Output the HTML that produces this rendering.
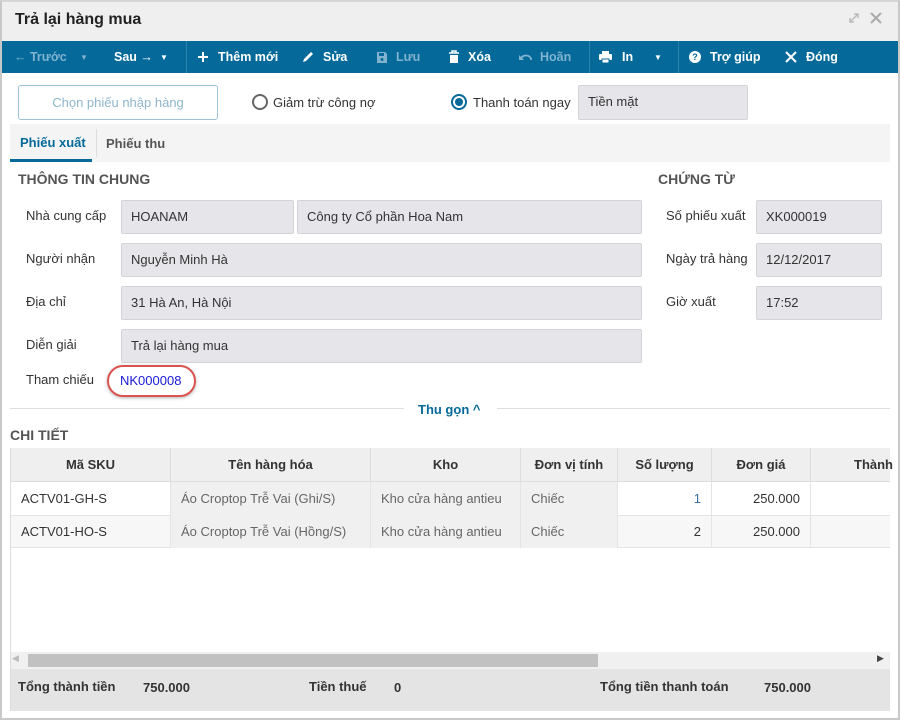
<!DOCTYPE html>
<html><head><meta charset="utf-8"><style>
*{box-sizing:border-box;margin:0;padding:0}
body{width:900px;height:720px;background:#fff;font-family:"Liberation Sans",sans-serif;font-size:13px;color:#333;position:relative;overflow:hidden}
.a{position:absolute}
.win{left:0;top:0;width:900px;height:720px;border:2px solid #c8c8c8;border-top-color:#d5d5d5}
.tb{left:2px;top:41px;width:896px;height:32px;background:#05699a;color:#fff;font-weight:bold;font-size:12.5px}
.tb span{position:absolute;top:9px}
.tb svg{position:absolute;top:9px}
.sep{position:absolute;top:0;width:1px;height:32px;background:#2a82ad}
.inp{position:absolute;background:#e6e6ea;border:1px solid #d3d3d8;border-radius:2px;padding:0 9px;line-height:32px;height:34px}
.lbl{position:absolute;color:#333}
.h{position:absolute;font-weight:bold;color:#555;font-size:14px}
.th{position:absolute;top:448px;height:34px;line-height:34px;text-align:center;font-weight:bold;border-right:1px solid #ddd}
.td{position:absolute;height:33px;line-height:33px;padding:0 10px;border-right:1px solid #e4e4e4}
</style></head><body>
<div class="a" style="left:0;top:0;width:900px;height:41px;background:#efefef"></div>
<div class="a win"></div>
<div class="a" style="left:15px;top:11px;font-size:16px;font-weight:bold;color:#222">Trả lại hàng mua</div>
<svg class="a" style="left:848px;top:12px" width="12" height="12" viewBox="0 0 12 12"><path d="M2 10L10 2M6 2h4v4M2 6v4h4" stroke="#bbb" stroke-width="1.5" fill="none"/></svg>
<svg class="a" style="left:870px;top:12px" width="12" height="12" viewBox="0 0 12 12"><path d="M1 1L11 11M11 1L1 11" stroke="#aaa" stroke-width="2"/></svg>
<div class="a tb">
 <span style="left:12px;color:#7fb3cf">← Trước</span><span style="left:78px;color:#7fb3cf;font-size:8px;top:12px">▼</span>
 <span style="left:112px">Sau →</span><span style="left:158px;font-size:8px;top:12px">▼</span>
 <div class="sep" style="left:184px"></div>
 <svg style="left:195px" width="12" height="14" viewBox="0 0 12 14"><path d="M6 2v10M1 7h10" stroke="#fff" stroke-width="2"/></svg><span style="left:216px">Thêm mới</span>
 <svg style="left:299px" width="13" height="14" viewBox="0 0 13 14"><path d="M2 12l1-3 7-7 2 2-7 7z" fill="#fff"/></svg><span style="left:321px">Sửa</span>
 <svg style="left:374px" width="12" height="14" viewBox="0 0 12 14"><path d="M1 2h8l2 2v9H1z" fill="#7fb3cf"/><rect x="3" y="3" width="5" height="3" fill="#05699a"/><circle cx="6" cy="9.5" r="1.5" fill="#05699a"/></svg><span style="left:394px;color:#7fb3cf">Lưu</span>
 <svg style="left:446px" width="12" height="14" viewBox="0 0 12 14"><path d="M1 3h10M4 3V1h4v2" stroke="#fff" stroke-width="1.5" fill="none"/><path d="M2 5h8v8H2z" fill="#fff"/></svg><span style="left:466px">Xóa</span>
 <svg style="left:516px" width="14" height="14" viewBox="0 0 14 14"><path d="M3 9a5 4 0 0 1 10 1" stroke="#7fb3cf" stroke-width="1.8" fill="none"/><path d="M1 5v5h5z" fill="#7fb3cf"/></svg><span style="left:538px;color:#7fb3cf">Hoãn</span>
 <div class="sep" style="left:587px"></div>
 <svg style="left:596px" width="15" height="14" viewBox="0 0 15 14"><rect x="4" y="1" width="7" height="3" fill="#fff"/><rect x="1" y="4" width="13" height="6" rx="1" fill="#fff"/><rect x="4" y="9" width="7" height="4" fill="#fff" stroke="#05699a"/></svg><span style="left:620px">In</span><span style="left:652px;font-size:8px;top:12px">▼</span>
 <div class="sep" style="left:676px"></div>
 <span style="left:687px;width:12px;height:12px;border-radius:50%;background:#fff;color:#05699a;font-size:9px;text-align:center;line-height:12px;top:10px">?</span><span style="left:708px">Trợ giúp</span>
 <svg style="left:783px;top:10px" width="12" height="12" viewBox="0 0 12 12"><path d="M1 1L11 11M11 1L1 11" stroke="#fff" stroke-width="2"/></svg><span style="left:804px">Đóng</span>
</div>
<div class="a" style="left:18px;top:85px;width:200px;height:35px;border:1px solid #9cc2d6;border-radius:3px;text-align:center;line-height:33px;color:#8fb6cc">Chọn phiếu nhập hàng</div>
<div class="a" style="left:252px;top:94px;width:16px;height:16px;border:2px solid #666;border-radius:50%"></div>
<div class="lbl" style="left:273px;top:95px">Giảm trừ công nợ</div>
<div class="a" style="left:451px;top:94px;width:16px;height:16px;border:2px solid #05699a;border-radius:50%"><div class="a" style="left:2px;top:2px;width:8px;height:8px;border-radius:50%;background:#05699a"></div></div>
<div class="lbl" style="left:473px;top:95px">Thanh toán ngay</div>
<div class="inp" style="left:578px;top:85px;width:170px;height:35px">Tiền mặt</div>
<div class="a" style="left:10px;top:124px;width:880px;height:38px;background:#f4f4f4"></div>
<div class="a" style="left:20px;top:135px;font-weight:bold;color:#05699a">Phiếu xuất</div>
<div class="a" style="left:10px;top:159px;width:82px;height:3px;background:#05699a"></div>
<div class="a" style="left:96px;top:129px;width:1px;height:28px;background:#ddd"></div>
<div class="a" style="left:106px;top:136px;font-weight:bold;color:#555">Phiếu thu</div>
<div class="h" style="left:18px;top:171px">THÔNG TIN CHUNG</div>
<div class="h" style="left:658px;top:171px">CHỨNG TỪ</div>
<div class="lbl" style="left:26px;top:208px">Nhà cung cấp</div>
<div class="lbl" style="left:26px;top:251px">Người nhận</div>
<div class="lbl" style="left:26px;top:294px">Địa chỉ</div>
<div class="lbl" style="left:26px;top:337px">Diễn giải</div>
<div class="lbl" style="left:26px;top:372px">Tham chiếu</div>
<div class="inp" style="left:121px;top:200px;width:173px">HOANAM</div>
<div class="inp" style="left:297px;top:200px;width:345px">Công ty Cổ phần Hoa Nam</div>
<div class="inp" style="left:121px;top:243px;width:521px">Nguyễn Minh Hà</div>
<div class="inp" style="left:121px;top:286px;width:521px">31 Hà An, Hà Nội</div>
<div class="inp" style="left:121px;top:329px;width:521px">Trả lại hàng mua</div>
<div class="a" style="left:107px;top:365px;width:89px;height:32px;border:2px solid #d9534f;border-radius:16px;box-shadow:0 1px 3px rgba(0,0,0,.3)"></div>
<div class="a" style="left:120px;top:373px;color:#1a1ad6">NK000008</div>
<div class="lbl" style="left:666px;top:208px">Số phiếu xuất</div>
<div class="lbl" style="left:666px;top:251px">Ngày trả hàng</div>
<div class="lbl" style="left:666px;top:294px">Giờ xuất</div>
<div class="inp" style="left:756px;top:200px;width:126px">XK000019</div>
<div class="inp" style="left:756px;top:243px;width:126px">12/12/2017</div>
<div class="inp" style="left:756px;top:286px;width:126px">17:52</div>
<div class="a" style="left:10px;top:408px;width:394px;height:1px;background:#ddd"></div>
<div class="a" style="left:497px;top:408px;width:393px;height:1px;background:#ddd"></div>
<div class="a" style="left:418px;top:402px;font-weight:bold;color:#05699a">Thu gọn ^</div>
<div class="h" style="left:10px;top:427px">CHI TIẾT</div>
<div class="a" style="left:10px;top:448px;width:880px;height:263px;border:1px solid #ddd;border-right:none"></div>
<div class="a" style="left:11px;top:448px;width:879px;height:34px;background:#efefef;border-bottom:1px solid #ddd"></div>
<div class="th" style="left:11px;width:160px">Mã SKU</div>
<div class="th" style="left:171px;width:200px">Tên hàng hóa</div>
<div class="th" style="left:371px;width:150px">Kho</div>
<div class="th" style="left:521px;width:97px">Đơn vị tính</div>
<div class="th" style="left:618px;width:94px">Số lượng</div>
<div class="th" style="left:712px;width:99px">Đơn giá</div>
<div class="th" style="left:811px;width:90px;text-align:left;padding-left:43px;border:none">Thành</div>
<div class="a" style="left:11px;top:515px;width:879px;height:33px;background:#f7f7f7;border-top:1px solid #e4e4e4;border-bottom:1px solid #e4e4e4"></div>
<div class="a" style="left:171px;top:482px;width:446px;height:66px;background:#f0f0f0"></div>
<div class="td" style="left:11px;top:482px;width:160px">ACTV01-GH-S</div>
<div class="td" style="left:171px;top:482px;width:200px;color:#666">Áo Croptop Trễ Vai (Ghi/S)</div>
<div class="td" style="left:371px;top:482px;width:150px;color:#666">Kho cửa hàng antieu</div>
<div class="td" style="left:521px;top:482px;width:97px;color:#666">Chiếc</div>
<div class="td" style="left:618px;top:482px;width:94px;text-align:right;color:#3b6ea0">1</div>
<div class="td" style="left:712px;top:482px;width:99px;text-align:right">250.000</div>
<div class="td" style="left:11px;top:515px;width:160px">ACTV01-HO-S</div>
<div class="td" style="left:171px;top:515px;width:200px;color:#666">Áo Croptop Trễ Vai (Hồng/S)</div>
<div class="td" style="left:371px;top:515px;width:150px;color:#666">Kho cửa hàng antieu</div>
<div class="td" style="left:521px;top:515px;width:97px;color:#666">Chiếc</div>
<div class="td" style="left:618px;top:515px;width:94px;text-align:right">2</div>
<div class="td" style="left:712px;top:515px;width:99px;text-align:right">250.000</div>
<div class="a" style="left:11px;top:652px;width:879px;height:17px;background:#f0f0f0"></div>
<div class="a" style="left:28px;top:654px;width:570px;height:13px;background:#c1c1c1"></div>
<div class="a" style="left:12px;top:653px;font-size:9px;color:#bbb">◀</div>
<div class="a" style="left:877px;top:653px;font-size:9px;color:#444">▶</div>
<div class="a" style="left:11px;top:669px;width:879px;height:42px;background:#e4e4e4"></div>
<div class="a" style="left:18px;top:679px;font-weight:bold;color:#333">Tổng thành tiền</div>
<div class="a" style="left:143px;top:680px;font-weight:bold;color:#333">750.000</div>
<div class="a" style="left:309px;top:679px;font-weight:bold;color:#333">Tiền thuế</div>
<div class="a" style="left:394px;top:680px;font-weight:bold;color:#333">0</div>
<div class="a" style="left:600px;top:679px;font-weight:bold;color:#333">Tổng tiền thanh toán</div>
<div class="a" style="left:764px;top:680px;font-weight:bold;color:#333">750.000</div>
</body></html>
